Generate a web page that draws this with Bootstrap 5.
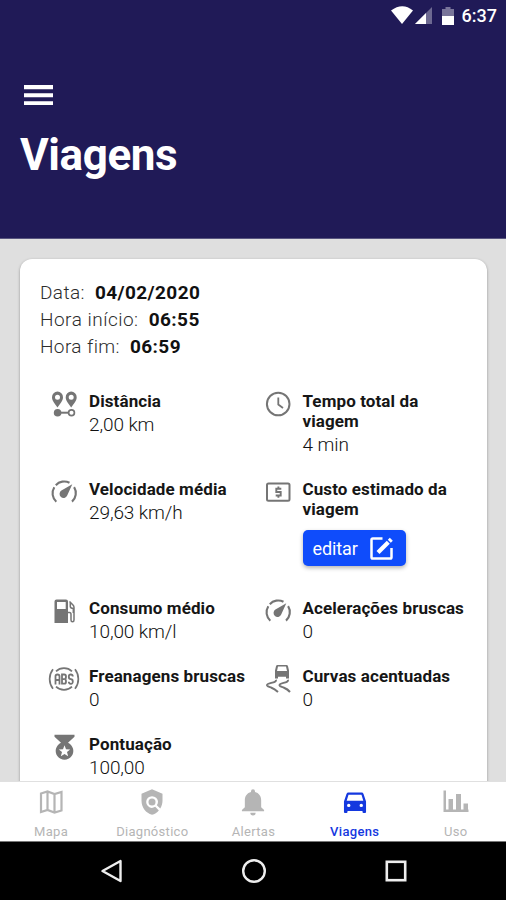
<!DOCTYPE html>
<html lang="pt-BR">
<head>
<meta charset="utf-8">
<meta name="viewport" content="width=device-width, initial-scale=1">
<title>Viagens</title>
<link href="https://cdn.jsdelivr.net/npm/bootstrap@5.3.0/dist/css/bootstrap.min.css" rel="stylesheet">
<style>
  body { font-family: Roboto, "Liberation Sans", sans-serif; background: #dfdfdf; color: #161616; }
  svg { display: block; flex: none; }
  .app { height: 900px; overflow: hidden; }
  .app-head { height: 239px; background: #201a57; border-bottom: 1px solid #58557f; }
  .status { height: 32px; padding-right: 9px; }
  .status-time { font-size: 18px; font-weight: 500; line-height: 32px; margin-left: 8px; }
  .menu-btn { margin: 53px 0 0 24px; }
  .page-title { font-size: 44px; font-weight: 700; line-height: 52px; margin: 23px 0 0 20px; letter-spacing: -.4px; }
  .app-main { min-height: 0; padding: 20px 19px 0 20px; overflow: hidden; }
  .trip { height: 640px; border-radius: 12px; box-shadow: 0 1px 3px rgba(0,0,0,.35); padding: 20px 20px 0; }
  .trip-info { font-size: 19px; line-height: 27px; font-weight: 300; letter-spacing: .4px; color: #2c2c2c; }
  .trip-info b { font-weight: 700; color: #111; margin-left: 5px; letter-spacing: .4px; }
  .trip-start { letter-spacing: .5px; }
  .stats { margin-top: 31px; }
  .stat { width: 50%; padding-bottom: 20px; }
  .stat-icon { width: 49px; color: #757575; }
  .stat-icon svg { margin-left: 10px; }
  .stat-icon .icon-wide { margin-left: 8px; }
  .stat-name { font-size: 17px; font-weight: 700; line-height: 20px; letter-spacing: .1px; white-space: nowrap; }
  .stat-value { font-size: 19px; line-height: 28px; font-weight: 300; letter-spacing: -.1px; color: #111; }
  .edit-btn { width: 103px; height: 36px; margin: 11px 0 12px; padding: 0 11px 0 10px; font-size: 18px; letter-spacing: -.1px; border-radius: 5px; background: #0f4cfb; border: 0; box-shadow: 0 2px 4px rgba(0,0,0,.3); --bs-btn-color: #fff; }
  .tabs { height: 61px; border-top: 1px solid #e0e0e0; border-bottom: 1px solid #777; }
  .tab { width: 20%; padding: 6px 0 0 1px; color: #b5b5b5; font-size: 13px; line-height: 16px; letter-spacing: .3px; text-decoration: none; }
  .tab svg { margin-bottom: 8px; }
  .tab.active { color: #1438df; font-weight: 500; }
  .sys-nav { height: 58px; background: #000; padding: 0 99px 0 99px; }
</style>
</head>
<body>
<svg width="0" height="0" class="position-absolute">
  <symbol id="gauge" viewBox="0 0 28 28">
    <g fill="none" stroke="currentColor" stroke-width="2.1">
      <path d="M6.300 22.700A11.300 11.300 0 0 1 4.300 8.300M5.800 6.200A11.300 11.300 0 0 1 19.500 3.800M24.100 8.100A11.300 11.300 0 0 1 22 22.600"/>
    </g>
    <path fill="currentColor" d="M22.300 5.200 11.400 11.600a4 4 0 1 0 5.800 5z"/>
  </symbol>
</svg>

<div class="app d-flex flex-column">
  <header class="app-head text-white flex-shrink-0">
    <div class="status d-flex justify-content-end align-items-center">
      <svg width="43" height="20" viewBox="0 0 43 20" fill="#fff">
        <path d="M0 4.500Q11.500-4 22 4.500L11 18z"/>
        <path d="M41 1v17H24z" opacity=".35"/><path d="M35 7v11H24z"/>
      </svg>
      <svg width="12" height="18" viewBox="0 0 12 18" fill="#fff" class="ms-2">
        <path d="M0 2h3.500V0h5v2H12v7H0z" opacity=".4"/><path d="M0 9h12v9H0z"/>
      </svg>
      <span class="status-time">6:37</span>
    </div>
    <svg class="menu-btn" width="29" height="21" viewBox="0 0 29 21" fill="#fff"><path d="M0 0h29v4.200H0zM0 8.300h29v3.900H0zM0 16.200h29v3.900H0z"/></svg>
    <h1 class="page-title">Viagens</h1>
  </header>

  <main class="app-main flex-grow-1">
    <section class="trip bg-white">
      <div class="trip-info">
        <div>Data: <b>04/02/2020</b></div>
        <div class="trip-start">Hora início: <b>06:55</b></div>
        <div>Hora fim: <b>06:59</b></div>
      </div>
      <div class="stats d-flex flex-wrap">
        <div class="stat d-flex">
          <div class="stat-icon">
            <svg width="28" height="28" viewBox="0 0 28 28">
              <path fill="currentColor" fill-rule="evenodd" d="M7.500.6A5.600 5.600 0 0 1 13 6.200C13 10 9.700 13 7.500 16.400 5.300 13 2 10 2 6.200A5.600 5.600 0 0 1 7.500.6zm0 3.200a2.500 2.500 0 1 0 0 5 2.500 2.500 0 0 0 0-5zM21.200.6a5.600 5.600 0 0 1 5.500 5.600c0 3.800-3.300 6.800-5.500 10.200-2.200-3.400-5.500-6.400-5.500-10.200A5.600 5.600 0 0 1 21.200.6zm0 3.200a2.500 2.500 0 1 0 0 5 2.500 2.500 0 0 0 0-5z"/>
              <circle cx="7.600" cy="21.700" r="3.800" fill="currentColor"/>
              <path d="M11 21.700h7.500" stroke="currentColor" stroke-width="2"/>
              <circle cx="21.500" cy="21.700" r="2.900" fill="none" stroke="currentColor" stroke-width="1.700"/>
            </svg>
          </div>
          <div><div class="stat-name">Distância</div><div class="stat-value">2,00 km</div></div>
        </div>
        <div class="stat d-flex">
          <div class="stat-icon">
            <svg width="28" height="28" viewBox="0 0 28 28" fill="none" stroke="currentColor" stroke-width="2"><circle cx="14.200" cy="13" r="11.300"/><path d="M14.300 6.500v7l4.700 3.500" stroke-width="1.800"/></svg>
          </div>
          <div><div class="stat-name">Tempo total da<br>viagem</div><div class="stat-value">4 min</div></div>
        </div>

        <div class="stat d-flex">
          <div class="stat-icon"><svg width="28" height="28"><use href="#gauge"/></svg></div>
          <div><div class="stat-name">Velocidade média</div><div class="stat-value">29,63 km/h</div></div>
        </div>
        <div class="stat d-flex">
          <div class="stat-icon">
            <svg width="28" height="28" viewBox="0 0 28 28" fill="none" stroke="currentColor" stroke-width="2"><rect x="3" y="4.500" width="22.500" height="17.300" rx="1.500"/><path d="M17.300 9.800h-5v3.200h4.400v3.500h-5M14.400 7.600v2M14.400 16.500v2.200" stroke-width="1.900"/></svg>
          </div>
          <div>
            <div class="stat-name">Custo estimado da<br>viagem</div>
            <button type="button" class="edit-btn btn d-flex align-items-center justify-content-between">editar
              <svg width="26" height="26" viewBox="0 0 26 26" fill="none" stroke="#fff" stroke-width="2.500"><path d="M13.500 3.500H3.800Q2.500 3.500 2.500 4.800v17.400q0 1.300 1.300 1.300h17.400q1.300 0 1.300-1.300V13"/><path d="M9 17.500 19.300 7.200" stroke-width="4.200"/><path d="M20.300 6.200l2-2" stroke-width="4.200"/></svg>
            </button>
          </div>
        </div>

        <div class="stat d-flex">
          <div class="stat-icon">
            <svg width="28" height="28" viewBox="0 0 28 28">
              <path fill="currentColor" fill-rule="evenodd" d="M6.500 1.500h9.500a2 2 0 0 1 2 2V25H4.500V3.500a2 2 0 0 1 2-2zM7 4v7h8.700V4z"/>
              <path d="M18 14.500h1.500q1.500 0 1.500 2V22q0 1.800 1.500 1.800T24 22V9.500q0-1.500-1-2.500l-3.500-3.500M20.300 5v3.500q0 1.800 3 2V15" fill="none" stroke="currentColor" stroke-width="1.500"/>
            </svg>
          </div>
          <div><div class="stat-name">Consumo médio</div><div class="stat-value">10,00 km/l</div></div>
        </div>
        <div class="stat d-flex">
          <div class="stat-icon"><svg width="28" height="28"><use href="#gauge"/></svg></div>
          <div><div class="stat-name">Acelerações bruscas</div><div class="stat-value">0</div></div>
        </div>

        <div class="stat d-flex">
          <div class="stat-icon">
            <svg class="icon-wide" width="32" height="28" viewBox="0 0 32 28" fill="none" stroke="currentColor" stroke-width="1.700">
              <path d="M8 5.300A11.500 11.500 0 0 1 24 5.300M8 20.700a11.500 11.500 0 0 0 16 0"/>
              <path d="M5 3.200a16 16 0 0 0 0 19.600M27 3.200a16 16 0 0 1 0 19.600"/>
              <path stroke-width="1.800" d="M7.500 18.500v-8.200q0-1.800 2-1.800t2 1.800v8.200M7.500 14h4M14 8.500v9.200h2.300q1.700 0 1.700-2.300t-1.700-2.300q1.700 0 1.700-2.300t-1.700-2.300zM14.200 13.100h2M24.800 10.500q0-2-2-2t-2 2.300 2 2.300 2 2.400-2 2.300-2-2"/>
            </svg>
          </div>
          <div><div class="stat-name">Freanagens bruscas</div><div class="stat-value">0</div></div>
        </div>
        <div class="stat d-flex">
          <div class="stat-icon">
            <svg width="28" height="28" viewBox="0 1 28 28" overflow="visible">
              <path fill="currentColor" fill-rule="evenodd" d="M13.500 0h9q1.200 0 1.500 1.200L25 5.500v8h-3v-1.700H14v1.700h-3v-8l1-4.300Q12.300 0 13.500 0zm.5 1.500-1 4.500h10l-1-4.500z"/>
              <path d="M12 14.800c1 3.400-9.500 2.700-9 5.400.3 1.300 2.300 1.600 4.500 2.500 2.800 1.100 4.800 2.800 6.500 4.300M24 14.800c1 3.400-9 2.700-8.500 5.400.3 1.300 2.300 1.600 4.500 2.500 2.600 1 4.500 2.500 6 4.300" fill="none" stroke="currentColor" stroke-width="2"/>
            </svg>
          </div>
          <div><div class="stat-name">Curvas acentuadas</div><div class="stat-value">0</div></div>
        </div>

        <div class="stat d-flex">
          <div class="stat-icon">
            <svg width="28" height="28" viewBox="0 0 28 28"><path fill="currentColor" fill-rule="evenodd" d="M4.500.8h20v2l-6.500 6a8.800 8.800 0 1 1-7 0l-6.500-6zM14.500 11.200l-1.500 4-4.200.2 3.200 2.700-1.100 4.100 3.600-2.300 3.600 2.300-1.100-4.100 3.200-2.700-4.200-.2z"/></svg>
          </div>
          <div><div class="stat-name">Pontuação</div><div class="stat-value">100,00</div></div>
        </div>
      </div>
    </section>
  </main>

  <nav class="tabs d-flex bg-white flex-shrink-0">
    <a class="tab d-flex flex-column align-items-center" href="#">
      <svg width="28" height="28" viewBox="0 0 28 28" fill="none" stroke="currentColor" stroke-width="2.200"><path d="M4 5.500 10.500 3.500 17.500 6 24.500 4V22.500L17.500 24.500 10.500 22 4 24zM10.500 3.500V22M17.500 6v18.500"/></svg>Mapa</a>
    <a class="tab d-flex flex-column align-items-center" href="#">
      <svg width="28" height="28" viewBox="0 0 24 24" fill="currentColor"><path d="M21 5l-9-4-9 4v6c0 5.550 3.840 10.740 9 12 2.300-.56 4.330-1.900 5.880-3.710l-3.120-3.120a4.994 4.994 0 0 1-6.290-.64 5.003 5.003 0 0 1 0-7.070 5.003 5.003 0 0 1 7.070 0 5.006 5.006 0 0 1 .64 6.290l2.900 2.900C20.290 15.690 21 13.380 21 11z"/><circle cx="12" cy="12" r="3"/></svg>Diagnóstico</a>
    <a class="tab d-flex flex-column align-items-center" href="#">
      <svg width="28" height="28" viewBox="0 0 24 24" fill="currentColor"><path d="M12 23.500a2.300 2.300 0 0 0 2.300-2.300H9.700A2.300 2.300 0 0 0 12 23.500zM19 16.500V10.500c0-3.500-2-6.200-5.300-7V2.800a1.700 1.700 0 0 0-3.400 0v.7C7 4.300 5 7 5 10.500v6L2.500 18.800V20h19v-1.200z"/></svg>Alertas</a>
    <a class="tab active d-flex flex-column align-items-center" href="#">
      <svg width="28" height="28" viewBox="-.3 -.3 24.600 24.600" fill="currentColor"><path fill-rule="evenodd" d="M19.500 5q-.4-1.300-1.700-1.300H6.200Q5 3.700 4.500 5L2.300 11.500v9.300q0 .9.900.9h1.300q.9 0 .9-.9v-1h13.200v1q0 .9.900.9h1.300q.9 0 .9-.9v-9.300zM6.500 16.500a1.500 1.500 0 1 1 0-3 1.500 1.500 0 0 1 0 3zm11 0a1.500 1.500 0 1 1 0-3 1.500 1.500 0 0 1 0 3zM4.700 11l1.600-5.400h11.400L19.300 11z"/></svg>Viagens</a>
    <a class="tab d-flex flex-column align-items-center" href="#">
      <svg width="28" height="28" viewBox="0 0 28 28" fill="currentColor"><path d="M1.500 2.500H4v19h22.500V24h-25zM6.500 11H11v11H6.500zM14 6h5v16h-5zM21.500 15.500H26V22h-4.500z"/></svg>Uso</a>
  </nav>

  <div class="sys-nav d-flex justify-content-between align-items-center flex-shrink-0">
    <svg width="26" height="26" viewBox="0 0 26 26" fill="none" stroke="#eee" stroke-width="2.400" stroke-linejoin="round"><path d="M21.500 3v20L3.500 13z"/></svg>
    <svg width="26" height="26" viewBox="1 0 26 26" fill="none" stroke="#eee" stroke-width="2.400" overflow="visible"><circle cx="13" cy="13" r="10.800"/></svg>
    <svg width="22" height="26" viewBox="0 0 22 26" fill="none" stroke="#eee" stroke-width="2.600"><rect x="1.800" y="3.800" width="18.400" height="18.400"/></svg>
  </div>
</div>
<script src="https://cdn.jsdelivr.net/npm/bootstrap@5.3.0/dist/js/bootstrap.bundle.min.js"></script>
</body>
</html>
